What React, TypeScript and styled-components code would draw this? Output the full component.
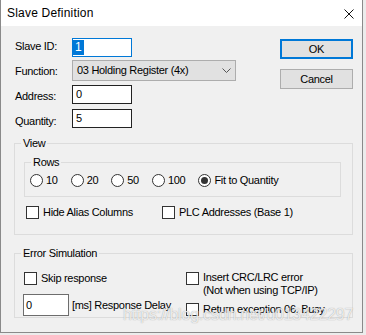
import React from "react";
import styled, { createGlobalStyle } from "styled-components";

const GlobalStyle = createGlobalStyle`
  html, body { margin: 0; padding: 0; background: #ececec; }
  * { box-sizing: border-box; }
`;

const Window = styled.div`
  position: relative;
  width: 363px;
  height: 333px;
  border: 1px solid #8a8a8a;
  border-top: none;
  background: #f0f0f0;
  font-family: "Liberation Sans", Arial, sans-serif;
  font-size: 11px;
  line-height: 13px;
  letter-spacing: -0.3px;
  color: #000;
`;

const TitleBar = styled.div`
  height: 26px;
  background: #fff;
  display: flex;
  align-items: center;
  justify-content: space-between;
  padding: 0 8px 0 6px;
`;

const Title = styled.div`
  font-size: 12px;
  letter-spacing: 0.2px;
  line-height: 16px;
`;

const CloseButton = styled.div`
  width: 10px;
  height: 10px;
  display: flex;
  margin-top: 1px;
`;

const Body = styled.div`
  padding: 12px 9px 14px 13px;
`;

const TopSection = styled.div`
  display: flex;
  justify-content: space-between;
  align-items: flex-start;
`;

const Form = styled.div`
  display: flex;
  flex-direction: column;
`;

const FieldRow = styled.div<{ $h: number }>`
  display: flex;
  align-items: flex-start;
  height: ${(p) => p.$h}px;
`;

const FieldLabel = styled.div<{ $top: number }>`
  width: 58px;
  padding-left: 1px;
  margin-top: ${(p) => p.$top}px;
`;

const TextBox = styled.div<{ $w: number; $h: number; $border: string; $pad: number }>`
  width: ${(p) => p.$w}px;
  height: ${(p) => p.$h}px;
  border: 1px solid ${(p) => p.$border};
  background: #fff;
  display: flex;
  align-items: center;
  padding-left: ${(p) => p.$pad}px;
`;

const FocusBox = styled.div`
  width: 60px;
  height: 19px;
  border: 1px solid #0078d7;
  background: #fff;
  padding-top: 1px;
`;

const Selection = styled.span`
  display: inline-block;
  height: 15px;
  line-height: 15px;
  padding: 0 3px 0 2px;
  background: #0078d7;
  color: #fff;
  font-size: 12px;
`;

const Combo = styled.div`
  width: 164px;
  height: 21px;
  border: 1px solid #adadad;
  background: #e1e1e1;
  display: flex;
  align-items: center;
  justify-content: space-between;
  padding: 0 4px 0 4px;
`;

const Buttons = styled.div`
  display: flex;
  flex-direction: column;
  gap: 10px;
  margin-top: 1px;
`;

const Button = styled.button<{ $default?: boolean }>`
  width: 73px;
  height: 20px;
  padding: 0;
  border: ${(p) => (p.$default ? "2px solid #0078d7" : "1px solid #adadad")};
  background: #e1e1e1;
  font: inherit;
  color: #000;
  letter-spacing: -0.3px;
  display: flex;
  align-items: center;
  justify-content: center;
`;

const Group = styled.fieldset<{ $mt: number }>`
  margin: ${(p) => p.$mt}px 0 0 0;
  padding: 0;
  border: 1px solid #dcdcdc;
  min-width: 0;
`;

const Legend = styled.legend`
  margin-left: 6px;
  padding: 0 2px;
  height: 13px;
  line-height: 13px;
  font: inherit;
`;

const GroupBody = styled.div<{ $pad: string }>`
  padding: ${(p) => p.$pad};
`;

const RadioRow = styled.div`
  display: flex;
  gap: 13px;
`;

const RadioItem = styled.label`
  display: flex;
  align-items: center;
  gap: 3px;
  height: 13px;
`;

const Circle = styled.span`
  width: 13px;
  height: 13px;
  border-radius: 50%;
  border: 1px solid #333;
  background: #fff;
  display: flex;
  align-items: center;
  justify-content: center;
`;

const Dot = styled.span`
  width: 7px;
  height: 7px;
  border-radius: 50%;
  background: #333;
`;

const CheckRow = styled.div`
  display: grid;
  grid-template-columns: 136px auto;
  margin-top: 9px;
  padding-left: 2px;
`;

const CheckItem = styled.label<{ $top?: boolean; $mt?: number; $ml?: number }>`
  display: flex;
  align-items: ${(p) => (p.$top ? "flex-start" : "center")};
  gap: 4px;
  margin-top: ${(p) => p.$mt ?? 0}px;
  margin-left: ${(p) => p.$ml ?? 0}px;
  min-height: 13px;
`;

const Box = styled.span<{ $top?: boolean }>`
  flex: none;
  width: 13px;
  height: 13px;
  border: 1px solid #333;
  background: #fff;
  margin-top: ${(p) => (p.$top ? 1 : 0)}px;
`;

const ErrorGrid = styled.div`
  display: grid;
  grid-template-columns: 163px auto;
  padding: 11px 0 1px 8px;
`;

const Column = styled.div`
  display: flex;
  flex-direction: column;
`;

const DelayRow = styled.div`
  display: flex;
  align-items: center;
  gap: 3px;
  margin-top: 9px;
`;

const Watermark = styled.div`
  position: absolute;
  left: 122px;
  top: 306px;
  font-size: 16px;
  line-height: 18px;
  letter-spacing: -0.2px;
  color: rgba(255, 255, 255, 0.8);
  text-shadow: 0 0 1px rgba(110, 110, 110, 0.7);
  pointer-events: none;
  white-space: nowrap;
`;

const Radio = ({ label, checked }: { label: string; checked?: boolean }) => (
  <RadioItem>
    <Circle>{checked && <Dot />}</Circle>
    <span>{label}</span>
  </RadioItem>
);

export default function App() {
  return (
    <>
      <GlobalStyle />
      <Window>
        <TitleBar>
          <Title>Slave Definition</Title>
          <CloseButton>
            <svg width="10" height="10" viewBox="0 0 10 10">
              <path d="M0.5 0.5 L9.5 9.5 M9.5 0.5 L0.5 9.5" stroke="#111" strokeWidth="1" fill="none" />
            </svg>
          </CloseButton>
        </TitleBar>
        <Body>
          <TopSection>
            <Form>
              <FieldRow $h={22}>
                <FieldLabel $top={2}>Slave ID:</FieldLabel>
                <FocusBox>
                  <Selection>1</Selection>
                </FocusBox>
              </FieldRow>
              <FieldRow $h={25}>
                <FieldLabel $top={5}>Function:</FieldLabel>
                <Combo>
                  <span>03 Holding Register (4x)</span>
                  <svg width="9" height="5" viewBox="0 0 9 5">
                    <path d="M0.5 0.5 L4.5 4.5 L8.5 0.5" stroke="#555" strokeWidth="1" fill="none" />
                  </svg>
                </Combo>
              </FieldRow>
              <FieldRow $h={24}>
                <FieldLabel $top={5}>Address:</FieldLabel>
                <TextBox $w={60} $h={19} $border="#222" $pad={3}>0</TextBox>
              </FieldRow>
              <FieldRow $h={19}>
                <FieldLabel $top={6}>Quantity:</FieldLabel>
                <TextBox $w={60} $h={19} $border="#222" $pad={3}>5</TextBox>
              </FieldRow>
            </Form>
            <Buttons>
              <Button $default>OK</Button>
              <Button>Cancel</Button>
            </Buttons>
          </TopSection>

          <Group $mt={9}>
            <Legend>View</Legend>
            <GroupBody $pad="0 11px 15px 9px">
              <Group $mt={6}>
                <Legend>Rows</Legend>
                <GroupBody $pad="5px 0 9px 5px">
                  <RadioRow>
                    <Radio label="10" />
                    <Radio label="20" />
                    <Radio label="50" />
                    <Radio label="100" />
                    <Radio label="Fit to Quantity" checked />
                  </RadioRow>
                </GroupBody>
              </Group>
              <CheckRow>
                <CheckItem>
                  <Box />
                  <span>Hide Alias Columns</span>
                </CheckItem>
                <CheckItem>
                  <Box />
                  <span>PLC Addresses (Base 1)</span>
                </CheckItem>
              </CheckRow>
            </GroupBody>
          </Group>

          <Group $mt={12}>
            <Legend>Error Simulation</Legend>
            <ErrorGrid>
              <Column>
                <CheckItem $mt={1} $ml={1}>
                  <Box />
                  <span>Skip response</span>
                </CheckItem>
                <DelayRow>
                  <TextBox $w={46} $h={22} $border="#6d6d6d" $pad={2}>0</TextBox>
                  <span>[ms] Response Delay</span>
                </DelayRow>
              </Column>
              <Column>
                <CheckItem $top>
                  <Box $top />
                  <span>
                    Insert CRC/LRC error
                    <br />
                    (Not when using TCP/IP)
                  </span>
                </CheckItem>
                <CheckItem $mt={6}>
                  <Box />
                  <span>Return exception 06, Busy</span>
                </CheckItem>
              </Column>
            </ErrorGrid>
          </Group>
        </Body>
        <Watermark>https://blog.csdn.net/u013422297</Watermark>
      </Window>
    </>
  );
}
